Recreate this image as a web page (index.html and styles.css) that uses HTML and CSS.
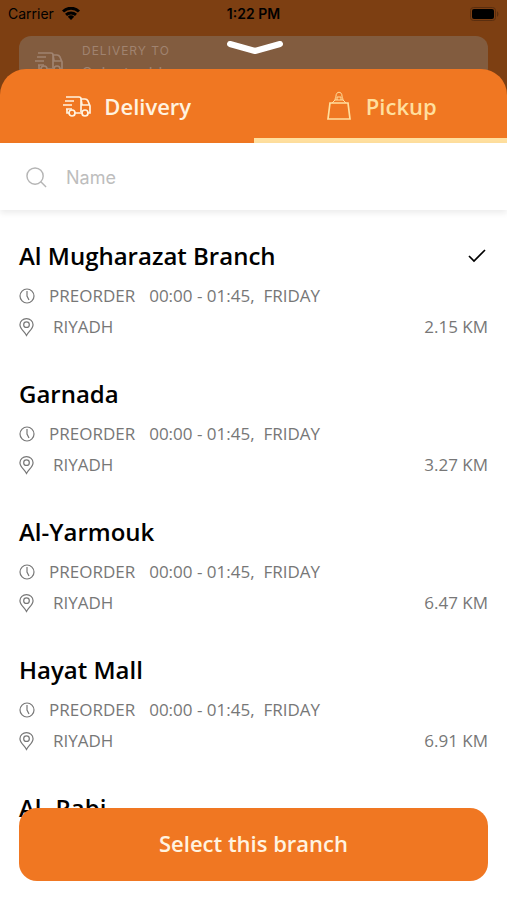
FILE: index.html
```html
<!DOCTYPE html>
<html lang="en">
<head>
<meta charset="utf-8">
<meta name="viewport" content="width=device-width, initial-scale=1">
<title>Select a branch</title>
<link rel="stylesheet" href="styles.css">
</head>
<body>
<svg class="defs" aria-hidden="true">
  <symbol id="truck" viewBox="0 0 30 22">
    <path stroke-width="1.700" d="M4 2H17Q19 2 19 4V17M3 6H12M1 10H10M4 14H10M5 14V18H7M13 18H20M19 4H23Q25 4 26 6L28 11V18H26M19 4L20 10H27"/>
    <g stroke-width="1.700"><circle cx="10" cy="18" r="3"/><circle cx="23" cy="18" r="3"/></g>
  </symbol>
  <symbol id="clock" viewBox="0 0 16 16"><g stroke-width="1.200"><circle cx="8" cy="8" r="7"/><path d="M8 3V8L10 12"/></g></symbol>
  <symbol id="pin" viewBox="0 0 16 20"><g stroke-width="1.300"><path d="M8 19C6 15 1 12 1 7.500A7 6.500 0 0 1 15 7.500C15 12 10 15 8 19Z"/><circle cx="8" cy="7.500" r="3"/></g></symbol>
</svg>
<div class="app">
  <header class="backdrop">
    <div class="status">
      <span class="carrier">Carrier
        <svg class="wifi" viewBox="0 0 18 13" aria-hidden="true"><path d="M1 4.500A11.500 11.500 0 0 1 17 4.500M4 7.800A7.500 7.500 0 0 1 14 7.800"/><path class="dot" d="M5.800 9.700A5 5 0 0 1 12.200 9.700L9 13Z"/></svg>
      </span>
      <span class="time">1:22 PM</span>
      <svg class="battery" viewBox="0 0 29 14" aria-hidden="true"><rect class="case" x=".5" y=".5" width="25" height="13" rx="3"/><rect x="2" y="2" width="22" height="10" rx="2"/><path class="tip" d="M27 4Q30 7 27 10Z"/></svg>
    </div>
    <div class="address">
      <svg class="truck" aria-hidden="true"><use href="#truck"/></svg>
      <div><p class="label">DELIVERY TO</p><p class="place">Select address</p></div>
    </div>
    <svg class="handle" viewBox="0 0 58 16" aria-hidden="true"><path d="M4 4L29 11L54 4"/></svg>
  </header>
  <main class="sheet">
    <nav class="tabs">
      <button class="tab" type="button"><svg class="truck" aria-hidden="true"><use href="#truck"/></svg>Delivery</button>
      <button class="tab active" type="button"><svg class="bag" viewBox="0 0 24 30" aria-hidden="true"><path stroke-width="1.700" d="M3 12H21L23 28H1Z"/><path stroke-width="1" d="M5 12L8 9H16L19 12M8 9C8 7 9 7 9 5C9 0 15 0 15 5C15 7 16 7 16 9M10 6H14M10 9V6M14 9V6"/></svg>Pickup</button>
    </nav>
    <label class="search">
      <svg viewBox="0 0 22 22" aria-hidden="true"><g stroke-width="1.500"><circle cx="9.500" cy="9.500" r="8.500"/><path d="M15.500 15.500L21 21"/></g></svg>
      <input type="text" placeholder="Name" aria-label="Name">
    </label>
    <ul class="branches">
      <li class="branch">
        <div class="row"><h2>Al Mugharazat Branch</h2><svg class="check" viewBox="0 0 18 14" aria-hidden="true"><path stroke-width="1.700" d="M1 7L6 12L17 1"/></svg></div>
        <p class="hours"><svg class="clock" aria-hidden="true"><use href="#clock"/></svg><span>PREORDER</span><span>00:00 - 01:45,&nbsp; FRIDAY</span></p>
        <p class="city"><svg class="pin" aria-hidden="true"><use href="#pin"/></svg><span>RIYADH</span><span class="distance">2.15 KM</span></p>
      </li>
      <li class="branch">
        <div class="row"><h2>Garnada</h2></div>
        <p class="hours"><svg class="clock" aria-hidden="true"><use href="#clock"/></svg><span>PREORDER</span><span>00:00 - 01:45,&nbsp; FRIDAY</span></p>
        <p class="city"><svg class="pin" aria-hidden="true"><use href="#pin"/></svg><span>RIYADH</span><span class="distance">3.27 KM</span></p>
      </li>
      <li class="branch">
        <div class="row"><h2>Al-Yarmouk</h2></div>
        <p class="hours"><svg class="clock" aria-hidden="true"><use href="#clock"/></svg><span>PREORDER</span><span>00:00 - 01:45,&nbsp; FRIDAY</span></p>
        <p class="city"><svg class="pin" aria-hidden="true"><use href="#pin"/></svg><span>RIYADH</span><span class="distance">6.47 KM</span></p>
      </li>
      <li class="branch">
        <div class="row"><h2>Hayat Mall</h2></div>
        <p class="hours"><svg class="clock" aria-hidden="true"><use href="#clock"/></svg><span>PREORDER</span><span>00:00 - 01:45,&nbsp; FRIDAY</span></p>
        <p class="city"><svg class="pin" aria-hidden="true"><use href="#pin"/></svg><span>RIYADH</span><span class="distance">6.91 KM</span></p>
      </li>
      <li class="branch">
        <div class="row"><h2>Al- Rabi</h2></div>
      </li>
    </ul>
  </main>
  <button class="select" type="button">Select this branch</button>
</div>
</body>
</html>
```
FILE: styles.css
```css
* { box-sizing: border-box; margin: 0; padding: 0; }
body { font-family: "Open Sans", sans-serif; background: #fff; }
button, input { font: inherit; border: 0; background: none; }
svg { fill: none; stroke: currentColor; flex: none; }
.defs { position: absolute; width: 0; height: 0; }
.app { position: relative; display: flex; flex-direction: column; height: 100vh; overflow: hidden; }

.backdrop { position: relative; height: 100px; flex: none; overflow: hidden; background: #7d3f12; color: #000; font-family: Inter, sans-serif; }
.status { display: grid; grid-template-columns: 1fr auto 1fr; align-items: center; height: 27px; padding: 0 8px; font-size: 14px; }
.carrier { display: flex; align-items: center; gap: 8px; }
.wifi { width: 18px; height: 13px; stroke-width: 3; }
.wifi .dot { fill: currentColor; stroke: none; }
.time { font-weight: 600; }
.battery { width: 29px; height: 14px; justify-self: end; fill: #000; stroke: none; }
.battery .case { fill: none; stroke: #5a2e0f; }
.battery .tip { fill: #5a2e0f; }
.address { display: flex; gap: 18px; height: 80px; margin: 9px 19px 0; padding: 6px 15px; border-radius: 12px; background: #825c3f; color: #a08370; }
.address .truck { margin-top: 9px; }
.label { font-size: 12px; line-height: 17px; letter-spacing: 1px; }
.place { font-size: 16px; line-height: 28px; }
.truck { width: 30px; height: 22px; }
.handle { position: absolute; top: 40px; left: 50%; width: 58px; height: 16px; margin-left: -28px; color: #fff; stroke-width: 6; stroke-linecap: round; stroke-linejoin: round; }

.sheet { position: relative; display: flex; flex-direction: column; flex: 1; min-height: 0; margin-top: -31px; }
.tabs { display: grid; grid-template-columns: 1fr 1fr; height: 74px; flex: none; overflow: hidden; border-radius: 26px 26px 0 0; background: #f07722; }
.tab { display: flex; align-items: center; justify-content: center; gap: 12px; padding-top: 4px; border-bottom: 5px solid transparent; color: #fff3e0; font-size: 22px; font-weight: 600; }
.tab.active { gap: 15px; padding-left: 3px; border-color: #ffdf9e; color: #ffdf9e; }
.bag { width: 24px; height: 30px; }
.search { display: flex; align-items: center; gap: 19px; height: 67px; flex: none; padding: 2px 26px 0; color: #b5b5b5; box-shadow: 0 3px 6px #00000014; }
.search svg { width: 21px; height: 21px; }
.search input { flex: 1; min-width: 0; font-family: Inter, sans-serif; font-size: 18px; outline: 0; }
.search input::placeholder { color: #bdbdbd; opacity: 1; }

.branches { flex: 1; min-height: 0; overflow: hidden; padding: 27px 19px 0; list-style: none; }
.branch { height: 138px; color: #777; font-size: 17px; }
.row { display: flex; align-items: center; justify-content: space-between; height: 38px; color: #000; }
.row h2 { font-size: 24px; font-weight: 600; line-height: 38px; }
.check { width: 18px; height: 14px; margin-right: 2px; }
.hours, .city { display: flex; align-items: center; line-height: 30px; white-space: pre; }
.hours { height: 42px; gap: 14px; }
.city { height: 20px; gap: 19px; }
.clock { width: 16px; height: 16px; }
.pin { width: 15px; height: 20px; }
.distance { margin-left: auto; }

.select { position: absolute; right: 19px; bottom: 19px; left: 19px; height: 73px; padding-bottom: 4px; border-radius: 18px; background: #f07722; color: #fff3e0; font-size: 22px; font-weight: 600; }
```
